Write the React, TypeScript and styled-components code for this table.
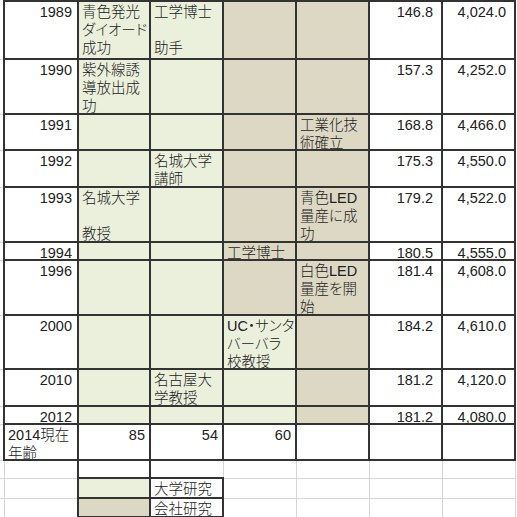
import React from "react"
import styled, { createGlobalStyle, css } from "styled-components"

type Fill = "w" | "g" | "b"

const GREEN = "#ebf0dd"
const BEIGE = "#ddd8c4"
const LINE = "#333"
const GRID = "#d6d6d6"

const GlobalStyle = createGlobalStyle`
	body {
		margin: 0;
		background: #fff;
		font-family: "Liberation Sans", "Noto Sans CJK JP", sans-serif;
	}
`

const Sheet = styled.table`
	border-collapse: collapse;
	table-layout: fixed;
	width: 515px;
	font-size: 14.5px;
	line-height: 18px;
	color: #222;
	font-weight: 300;
	font-feature-settings: "palt";
`

const Row = styled.tr<{ $h: number }>`
	height: ${(p) => p.$h}px;
`

const Gutter = styled.td`
	width: 4px;
	padding: 0;
	border: none;
	border-bottom: 1px solid ${GRID};
`

const fillOf = (f?: Fill) => (f === "g" ? GREEN : f === "b" ? BEIGE : "#fff")

const Cell = styled.td<{ $fill?: Fill; $right?: boolean; $pad?: number }>`
	vertical-align: top;
	padding: 0 ${(p) => p.$pad ?? 4}px 0 3px;
	border: 2px solid ${LINE};
	background: ${(p) => fillOf(p.$fill)};
	text-align: ${(p) => (p.$right ? "right" : "left")};
	white-space: pre;
	overflow: hidden;
`

// text block that lets a one-line cell keep the sheet's 18px row height
const Lines = styled.div`
	padding-top: 1px;
	margin-bottom: -4px;
`

const Blank = styled.td<{ $dark?: "left" | "both" }>`
	padding: 0;
	border: 1px solid ${GRID};
	${(p) =>
		p.$dark &&
		css`
			border-left: 2px solid ${LINE};
		`}
	${(p) =>
		p.$dark === "both" &&
		css`
			border-right: 2px solid ${LINE};
		`}
`

const Legend = styled.td<{ $fill?: Fill }>`
	vertical-align: top;
	padding: 0 3px;
	border: 2px solid ${LINE};
	background: ${(p) => fillOf(p.$fill)};
	white-space: pre;
`

type YearRow = {
	h: number
	year: string
	b?: string
	c?: string
	d?: string
	e?: string
	dFill: Fill
	f: string
	g: string
}

const years: YearRow[] = [
	{ h: 58, year: "1989", b: "青色発光\nダイオード\n成功", c: "工学博士\n\n助手", dFill: "b", f: "146.8", g: "4,024.0" },
	{ h: 55, year: "1990", b: "紫外線誘\n導放出成\n功", dFill: "b", f: "157.3", g: "4,252.0" },
	{ h: 36, year: "1991", e: "工業化技\n術確立", dFill: "b", f: "168.8", g: "4,466.0" },
	{ h: 37, year: "1992", c: "名城大学\n講師", dFill: "b", f: "175.3", g: "4,550.0" },
	{ h: 55, year: "1993", b: "名城大学\n\n教授", e: "青色LED\n量産に成\n功", dFill: "b", f: "179.2", g: "4,522.0" },
	{ h: 18, year: "1994", d: "工学博士", dFill: "b", f: "180.5", g: "4,555.0" },
	{ h: 55, year: "1996", e: "白色LED\n量産を開\n始", dFill: "b", f: "181.4", g: "4,608.0" },
	{ h: 54, year: "2000", d: "UC・サンタ\nバーバラ\n校教授", dFill: "g", f: "184.2", g: "4,610.0" },
	{ h: 37, year: "2010", c: "名古屋大\n学教授", dFill: "g", f: "181.2", g: "4,120.0" },
	{ h: 18, year: "2012", dFill: "g", f: "181.2", g: "4,080.0" },
]

const GridRest: React.FC<{ from: number }> = ({ from }) => (
	<>
		{Array.from({ length: 7 - from }, (_, i) => (
			<Blank key={i} />
		))}
	</>
)

const Text: React.FC<{ v?: string }> = ({ v }) => <Lines>{v ?? ""}</Lines>

export default function App() {
	return (
		<>
			<GlobalStyle />
			<Sheet>
				<colgroup>
					<col style={{ width: 4 }} />
					<col style={{ width: 74 }} />
					<col style={{ width: 72 }} />
					<col style={{ width: 73 }} />
					<col style={{ width: 73 }} />
					<col style={{ width: 73 }} />
					<col style={{ width: 73 }} />
					<col style={{ width: 73 }} />
				</colgroup>
				<tbody>
					{years.map((r) => (
						<Row key={r.year} $h={r.h}>
							<Gutter />
							<Cell $right $pad={5}><Text v={r.year} /></Cell>
							<Cell $fill="g"><Text v={r.b} /></Cell>
							<Cell $fill="g"><Text v={r.c} /></Cell>
							<Cell $fill={r.dFill}><Text v={r.d} /></Cell>
							<Cell $fill="b"><Text v={r.e} /></Cell>
							<Cell $right $pad={8}><Text v={r.f} /></Cell>
							<Cell $right $pad={8}><Text v={r.g} /></Cell>
						</Row>
					))}
					<Row $h={36}>
						<Gutter />
						<Cell><Text v={"2014現在\n年齢"} /></Cell>
						<Cell $right><Text v="85" /></Cell>
						<Cell $right><Text v="54" /></Cell>
						<Cell $right><Text v="60" /></Cell>
						<Cell />
						<Cell />
						<Cell />
					</Row>
					<Row $h={18}>
						<Gutter />
						<Blank />
						<Blank $dark="both" />
						<Blank $dark="left" />
						<GridRest from={3} />
					</Row>
					<Row $h={20}>
						<Gutter />
						<Blank />
						<Legend $fill="g" />
						<Legend><Text v="大学研究" /></Legend>
						<GridRest from={3} />
					</Row>
					<Row $h={19}>
						<Gutter />
						<Blank />
						<Legend $fill="b" />
						<Legend><Text v="会社研究" /></Legend>
						<GridRest from={3} />
					</Row>
				</tbody>
			</Sheet>
		</>
	)
}
